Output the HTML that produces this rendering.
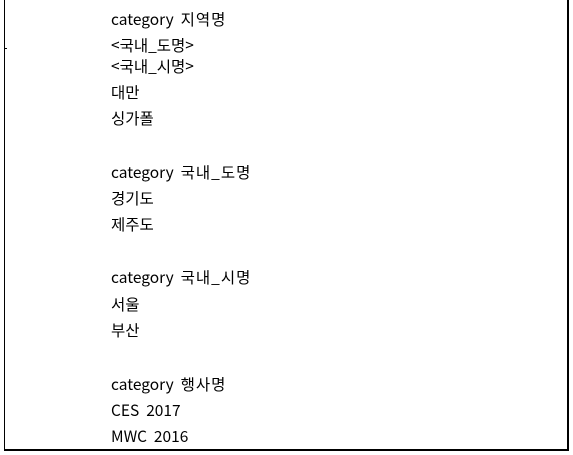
<html><head><style>
body{margin:0;width:573px;height:455px;background:#fff;position:relative;font-family:"Noto Sans CJK KR","Liberation Sans",sans-serif;font-size:15.5px;color:#000}
.b{position:absolute;left:4px;top:0;width:562px;height:449px;border:1px solid #000;border-top:none;border-width:0 2px 2px 1px}
.t{position:absolute;left:111px;line-height:18px;white-space:pre}
.k{letter-spacing:1px}
</style></head><body>
<div class="b"></div>
<div style="position:absolute;left:4px;top:48px;width:3px;height:1px;background:#000"></div>
<div class="t" style="top:10px">category  <span class="k">지역명</span></div>
<div class="t" style="top:36px">&lt;국내_도명&gt;</div>
<div class="t" style="top:57px">&lt;국내_시명&gt;</div>
<div class="t" style="top:83px">대만</div>
<div class="t" style="top:109px">싱가폴</div>
<div class="t" style="top:163px">category  <span class="k">국내_도명</span></div>
<div class="t" style="top:189px">경기도</div>
<div class="t" style="top:215px">제주도</div>
<div class="t" style="top:268px">category  <span class="k">국내_시명</span></div>
<div class="t" style="top:295px">서울</div>
<div class="t" style="top:321px">부산</div>
<div class="t" style="top:375px">category  <span class="k">행사명</span></div>
<div class="t" style="top:401px">CES  2017</div>
<div class="t" style="top:427px">MWC  2016</div>
</body></html>
